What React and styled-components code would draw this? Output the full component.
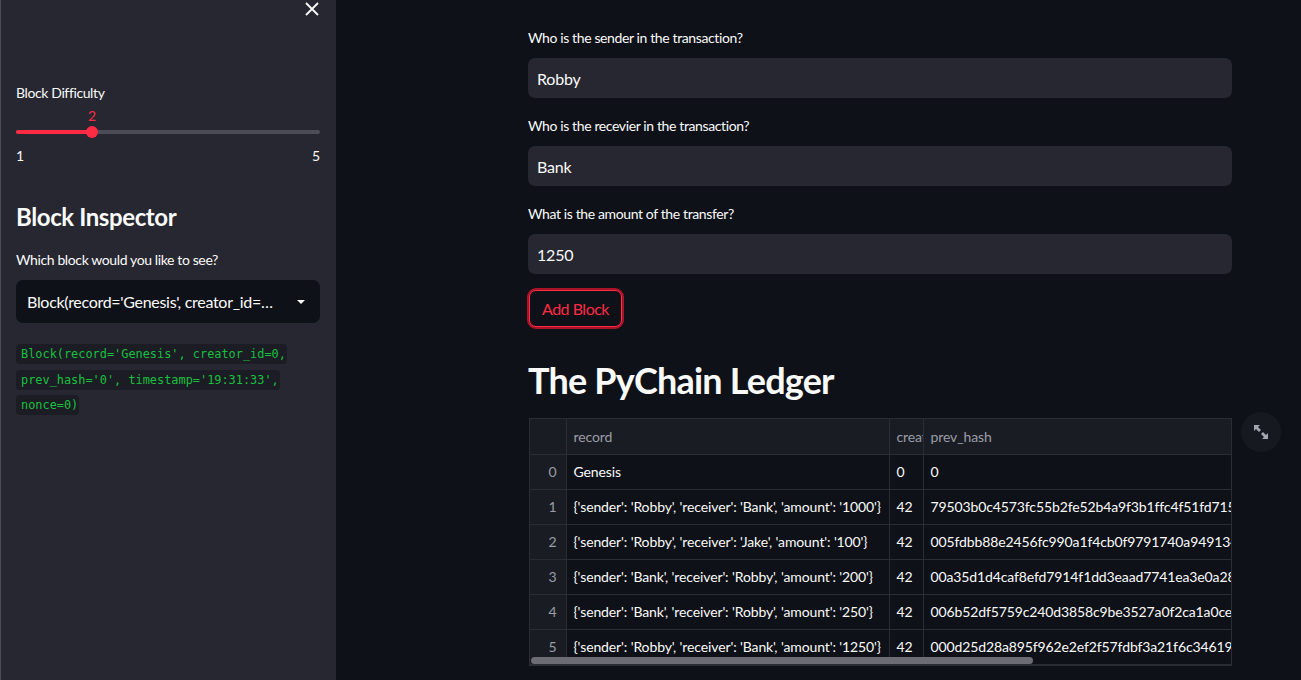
import React from "react";
import styled, { createGlobalStyle } from "styled-components";

const Global = createGlobalStyle`
  html, body { margin: 0; padding: 0; background: #0e1117; }
  body { font-family: "Lato", "Noto Sans", sans-serif; color: #fafafa; }
  * { box-sizing: border-box; }
`;

const RED = "#ff2b45";

const Page = styled.div`
  display: flex;
  width: 1301px;
  height: 680px;
  overflow: hidden;
  background: #0e1117;
`;

const Sidebar = styled.aside`
  position: relative;
  width: 336px;
  flex: none;
  background: #262730;
  border-left: 1px solid #4a4b54;
  padding: 81px 16px 0 15px;
  display: flex;
  flex-direction: column;
`;

const CloseBtn = styled.button`
  position: absolute;
  top: 1px;
  right: 16px;
  width: 16px;
  height: 16px;
  padding: 0;
  border: none;
  background: transparent;
  color: #fafafa;
  display: flex;
  align-items: center;
  justify-content: center;
`;

const Label = styled.div`
  font-size: 14px;
  line-height: 24px;
  letter-spacing: -0.38px;
  color: #fafafa;
  margin-bottom: ${(p) => p.$mb ?? 8}px;
`;

const SliderWrap = styled.div`
  position: relative;
  height: 66px;
`;

const SliderValue = styled.div`
  position: absolute;
  top: 2px;
  left: ${(p) => p.$pos}px;
  transform: translateX(-50%);
  color: ${RED};
  font-size: 14px;
  line-height: 18px;
`;

const Track = styled.div`
  position: absolute;
  top: 25px;
  left: 0;
  right: 0;
  height: 4px;
  border-radius: 2px;
  background: #4b4c56;
`;

const Fill = styled.div`
  height: 100%;
  border-radius: 2px;
  background: ${RED};
`;

const Thumb = styled.div`
  position: absolute;
  top: -4px;
  width: 12px;
  height: 12px;
  border-radius: 50%;
  background: ${RED};
  transform: translateX(-50%);
`;

const TickRow = styled.div`
  position: absolute;
  top: 42px;
  left: 0;
  right: 0;
  display: flex;
  justify-content: space-between;
  font-size: 14px;
  line-height: 18px;
  color: #fafafa;
`;

const H2 = styled.h2`
  margin: 29px 0 14px;
  font-size: 24px;
  line-height: 34px;
  font-weight: 700;
  letter-spacing: -0.4px;
  color: #fafafa;
`;

const Select = styled.div`
  height: 43px;
  background: #0e1117;
  border-radius: 7px;
  display: flex;
  align-items: center;
  justify-content: space-between;
  padding: 0 14px 0 11px;
  font-size: 16px;
  letter-spacing: -0.3px;
  color: #fafafa;
`;

const SelectText = styled.span`
  white-space: nowrap;
  overflow: hidden;
  text-overflow: ellipsis;
  max-width: 252px;
`;

const CodeP = styled.p`
  margin: 19px 0 0;
  width: 304px;
  font-family: "DejaVu Sans Mono", "Liberation Mono", monospace;
  font-size: 11.9px;
  line-height: 25.5px;
`;

const Code = styled.code`
  font-family: inherit;
  font-size: inherit;
  color: #19c03f;
  background: #1b1c24;
  padding: 3px 1px 3px 5px;
  border-radius: 4px;
  box-decoration-break: clone;
  -webkit-box-decoration-break: clone;
`;

const Main = styled.main`
  flex: 1;
  padding: 26px 0 0 192px;
`;

const Column = styled.div`
  width: 704px;
  display: flex;
  flex-direction: column;
`;

const Field = styled.div`
  margin-bottom: 16px;
`;

const Input = styled.div`
  height: 40px;
  background: #262730;
  border-radius: 7px;
  padding: 0 9px;
  display: flex;
  align-items: center;
  font-size: 16px;
  letter-spacing: -0.2px;
  color: #fafafa;
`;

const Button = styled.button`
  align-self: flex-start;
  height: 37px;
  padding: 0 12px;
  background: #0e1117;
  border: 1px solid ${RED};
  border-radius: 7px;
  box-shadow: 0 0 0 2px rgba(220, 20, 45, 0.75);
  color: ${RED};
  font-family: inherit;
  font-size: 16px;
  letter-spacing: -0.5px;
  margin-left: 1px;
`;

const H1 = styled.h1`
  margin: 31px 0 16px;
  font-size: 36px;
  line-height: 44px;
  font-weight: 700;
  color: #fafafa;
  letter-spacing: -0.8px;
`;

const TableWrap = styled.div`
  position: relative;
  width: 703px;
  margin-left: 1px;
`;

const TableClip = styled.div`
  overflow: hidden;
  border: 1px solid #2b2d35;
  height: 248px;
`;

const Table = styled.table`
  border-collapse: collapse;
  table-layout: fixed;
  width: 1100px;
  font-size: 14px;
  letter-spacing: -0.12px;
`;

const Th = styled.th`
  height: 35px;
  text-align: left;
  font-weight: 400;
  color: #9a9da6;
  background: #1a1c23;
  padding: 0 0 0 7px;
  border-right: 1px solid #2b2d35;
  border-bottom: 1px solid #2b2d35;
  white-space: nowrap;
  overflow: hidden;
`;

const Td = styled.td`
  height: 35px;
  padding: 0 ${(p) => (p.$index ? "9px" : "0")} 0 ${(p) => (p.$index ? "0" : "7px")};
  text-align: ${(p) => (p.$index ? "right" : "left")};
  color: ${(p) => (p.$index ? "#9a9da6" : "#fafafa")};
  background: ${(p) => (p.$index ? "#1a1c23" : "#0e1117")};
  border-right: 1px solid #2b2d35;
  border-bottom: 1px solid #2b2d35;
  white-space: nowrap;
  overflow: hidden;
`;

const ScrollThumb = styled.div`
  position: absolute;
  left: 2px;
  bottom: 2px;
  width: 502px;
  height: 7px;
  border-radius: 4px;
  background: #6c6d74;
`;

const ExpandBtn = styled.button`
  position: absolute;
  top: -6px;
  right: -49px;
  width: 40px;
  height: 40px;
  border-radius: 50%;
  border: none;
  background: #171921;
  display: flex;
  align-items: center;
  justify-content: center;
  padding: 0;
`;

const rows = [
  ["Genesis", "0", "0"],
  [
    "{'sender': 'Robby', 'receiver': 'Bank', 'amount': '1000'}",
    "42",
    "79503b0c4573fc55b2fe52b4a9f3b1ffc4f51fd7152314a8e6b0c2d9f1e3a7b5",
  ],
  [
    "{'sender': 'Robby', 'receiver': 'Jake', 'amount': '100'}",
    "42",
    "005fdbb88e2456fc990a1f4cb0f9791740a949134cde6f2b81a7c3d5e90f4b12",
  ],
  [
    "{'sender': 'Bank', 'receiver': 'Robby', 'amount': '200'}",
    "42",
    "00a35d1d4caf8efd7914f1dd3eaad7741ea3e0a2832ab7c9d01e4f5a6b3c2d8e",
  ],
  [
    "{'sender': 'Bank', 'receiver': 'Robby', 'amount': '250'}",
    "42",
    "006b52df5759c240d3858c9be3527a0f2ca1a0ce993f8e2d4b6a1c7f9e0d3b5a",
  ],
  [
    "{'sender': 'Robby', 'receiver': 'Bank', 'amount': '1250'}",
    "42",
    "000d25d28a895f962e2ef2f57fdbf3a21f6c34619358a8b1c2d3e4f5a6b7c8d9",
  ],
];

const fields = [
  ["Who is the sender in the transaction?", "Robby"],
  ["Who is the recevier in the transaction?", "Bank"],
  ["What is the amount of the transfer?", "1250"],
];

export default function App() {
  const sliderPos = 76;
  return (
    <>
      <Global />
      <Page>
        <Sidebar>
          <CloseBtn aria-label="close">
            <svg width="14" height="14" viewBox="0 0 14 14">
              <path d="M1 1L13 13M13 1L1 13" stroke="#fafafa" strokeWidth="1.8" />
            </svg>
          </CloseBtn>
          <Label $mb={0}>Block Difficulty</Label>
          <SliderWrap>
            <SliderValue $pos={sliderPos}>2</SliderValue>
            <Track>
              <Fill style={{ width: `${sliderPos}px` }} />
              <Thumb style={{ left: `${sliderPos}px` }} />
            </Track>
            <TickRow>
              <span>1</span>
              <span>5</span>
            </TickRow>
          </SliderWrap>
          <H2>Block Inspector</H2>
          <Label>Which block would you like to see?</Label>
          <Select>
            <SelectText>Block(record='Genesis', creator_id=0, prev_hash='0', timestamp='19:31:33', nonce=0)</SelectText>
            <svg width="10" height="6" viewBox="0 0 10 6">
              <path d="M1 1H9L5 5Z" fill="#fafafa" />
            </svg>
          </Select>
          <CodeP>
            <Code>Block(record='Genesis', creator_id=0, prev_hash='0', timestamp='19:31:33', nonce=0)</Code>
          </CodeP>
        </Sidebar>
        <Main>
          <Column>
            {fields.map(([l, v]) => (
              <Field key={l}>
                <Label>{l}</Label>
                <Input>{v}</Input>
              </Field>
            ))}
            <Button>Add Block</Button>
            <H1>The PyChain Ledger</H1>
            <TableWrap>
              <TableClip>
                <Table>
                  <colgroup>
                    <col style={{ width: 36 }} />
                    <col style={{ width: 323 }} />
                    <col style={{ width: 34 }} />
                    <col style={{ width: 707 }} />
                  </colgroup>
                  <thead>
                    <tr>
                      <Th />
                      <Th>record</Th>
                      <Th>creator_id</Th>
                      <Th>prev_hash</Th>
                    </tr>
                  </thead>
                  <tbody>
                    {rows.map((r, i) => (
                      <tr key={i}>
                        <Td $index>{i}</Td>
                        <Td>{r[0]}</Td>
                        <Td>{r[1]}</Td>
                        <Td>{r[2]}</Td>
                      </tr>
                    ))}
                  </tbody>
                </Table>
              </TableClip>
              <ScrollThumb />
              <ExpandBtn aria-label="expand">
                <svg width="16" height="16" viewBox="0 0 16 16">
                  <path d="M1 1H7L5 3L8 6L6 8L3 5L1 7Z" fill="#a3a6ae" />
                  <path d="M15 15H9L11 13L8 10L10 8L13 11L15 9Z" fill="#a3a6ae" />
                </svg>
              </ExpandBtn>
            </TableWrap>
          </Column>
        </Main>
      </Page>
    </>
  );
}
